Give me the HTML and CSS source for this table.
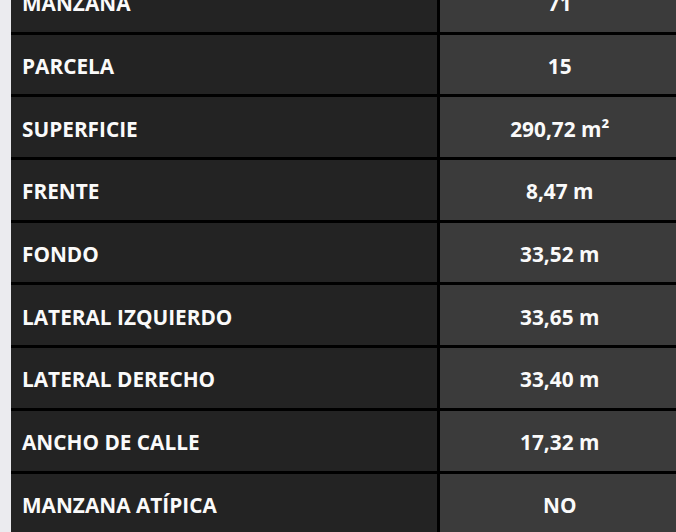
FILE: index.html
```html
<!DOCTYPE html>
<html lang="es">
<head>
<meta charset="utf-8">
<title>Datos del lote</title>
<link rel="stylesheet" href="styles.css">
</head>
<body>
<div class="page">
  <table class="lote">
    <colgroup>
      <col class="col-label">
      <col class="col-value">
    </colgroup>
    <tbody>
      <tr><th>MANZANA</th><td>71</td></tr>
      <tr><th>PARCELA</th><td>15</td></tr>
      <tr><th>SUPERFICIE</th><td>290,72 m²</td></tr>
      <tr><th>FRENTE</th><td>8,47 m</td></tr>
      <tr><th>FONDO</th><td>33,52 m</td></tr>
      <tr><th>LATERAL IZQUIERDO</th><td>33,65 m</td></tr>
      <tr><th>LATERAL DERECHO</th><td>33,40 m</td></tr>
      <tr><th>ANCHO DE CALLE</th><td>17,32 m</td></tr>
      <tr><th>MANZANA ATÍPICA</th><td>NO</td></tr>
    </tbody>
  </table>
</div>
</body>
</html>
```

FILE: styles.css
```css
html, body {
  margin: 0;
  padding: 0;
  background: #ebebef;
  overflow: hidden;
  width: 676px;
  height: 532px;
}

.page {
  padding-left: 11px;
  margin-top: -31px;
  width: 700px;
}

.lote {
  border-collapse: collapse;
  table-layout: fixed;
  width: 672px;
  font-family: "Open Sans", "Liberation Sans", sans-serif;
  font-weight: 700;
  font-size: 20.8px;
  color: #fafafa;
  background: #000;
}

.col-label {
  width: 427px;
}

.lote tr {
  height: 62.7px;
}

.lote th,
.lote td {
  box-sizing: border-box;
  border: 3px solid #000;
  padding: 4px 0 0 0;
  height: 62.7px;
  line-height: 27px;
  white-space: nowrap;
}

.lote th {
  background: #232323;
  text-align: left;
  padding-left: 11px;
  border-left: none;
  font-weight: 700;
}

.lote td {
  background: #3b3b3b;
  text-align: center;
}
```
